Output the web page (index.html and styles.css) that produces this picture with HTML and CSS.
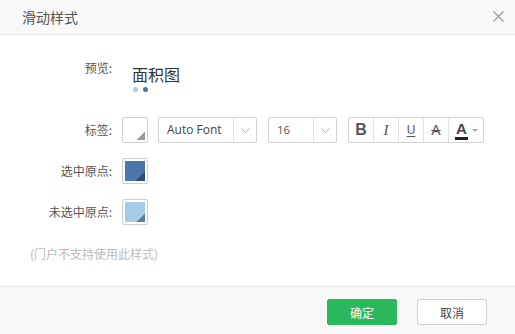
FILE: index.html
```html
<!DOCTYPE html>
<html lang="zh">
<head>
<meta charset="utf-8">
<title>滑动样式</title>
<link rel="stylesheet" href="styles.css">
</head>
<body>
<div class="dialog">
  <div class="header">
    <span class="title">滑动样式</span>
    <svg class="close" width="11" height="11" viewBox="0 0 11 11"><path d="M0.5 0.5L10.5 10.5M10.5 0.5L0.5 10.5" stroke="#999" stroke-width="1.1" fill="none"/></svg>
  </div>
  <div class="body">
    <div class="row preview-row">
      <div class="label">预览:</div>
      <div class="preview">
        <div class="preview-text">面积图</div>
        <div class="dots"><span class="dot light"></span><span class="dot dark"></span></div>
      </div>
    </div>
    <div class="row ctrl-row">
      <div class="label">标签:</div>
      <div class="controls">
        <div class="swatch white"><span class="corner"></span></div>
        <div class="select font-select">
          <span class="select-text">Auto Font</span>
          <span class="select-arrow"><svg width="9" height="5" viewBox="0 0 9 5"><path d="M0.5 0.5L4.5 4.5L8.5 0.5" stroke="#b5b5b5" fill="none"/></svg></span>
        </div>
        <div class="select size-select">
          <span class="select-text">16</span>
          <span class="select-arrow"><svg width="9" height="5" viewBox="0 0 9 5"><path d="M0.5 0.5L4.5 4.5L8.5 0.5" stroke="#b5b5b5" fill="none"/></svg></span>
        </div>
        <div class="toolbar">
          <span class="tb b">B</span>
          <span class="tb i">I</span>
          <span class="tb u">U</span>
          <span class="tb s">A</span>
          <span class="tb color"><span class="color-a">A</span><span class="caret"></span></span>
        </div>
      </div>
    </div>
    <div class="row ctrl-row">
      <div class="label">选中原点:</div>
      <div class="controls">
        <div class="swatch"><span class="fill dark-fill"><span class="corner dark-corner"></span></span></div>
      </div>
    </div>
    <div class="row ctrl-row">
      <div class="label">未选中原点:</div>
      <div class="controls">
        <div class="swatch"><span class="fill light-fill"><span class="corner light-corner"></span></span></div>
      </div>
    </div>
    <div class="note">(门户不支持使用此样式)</div>
  </div>
  <div class="footer">
    <button class="btn ok">确定</button>
    <button class="btn cancel">取消</button>
  </div>
</div>
</body>
</html>
```

FILE: styles.css
```css
* { box-sizing: border-box; }
html, body { margin: 0; padding: 0; background: #fff; }
body {
  font-family: "Noto Sans CJK SC", "Open Sans", sans-serif;
  color: #555;
  font-size: 12px;
}
.dialog {
  width: 515px;
  height: 334px;
  display: flex;
  flex-direction: column;
  background: #fff;
}
.header {
  height: 35px;
  flex: none;
  background: #f8f8f8;
  border-bottom: 1px solid #e8e8e8;
  display: flex;
  align-items: center;
  justify-content: space-between;
  padding: 0 11px 1px 22px;
}
.title {
  font-size: 14px;
  color: #555;
  line-height: 20px;
}
.close { display: block; }
.body {
  flex: 1;
  padding-top: 23px;
}
.row {
  display: grid;
  grid-template-columns: 112px 1fr;
  column-gap: 10px;
}
.label {
  text-align: right;
  color: #555;
  font-size: 12px;
  line-height: 20px;
  white-space: nowrap;
}
.preview-row {
  height: 44px;
  margin-bottom: 15px;
}
.preview {
  padding-left: 10px;
  padding-top: 5px;
}
.preview-text {
  font-size: 16px;
  line-height: 22px;
  color: #333;
}
.dots {
  display: flex;
  gap: 5px;
  margin-top: 2px;
  padding-left: 1px;
}
.dot {
  width: 5px;
  height: 5px;
  border-radius: 50%;
  display: block;
}
.dot.light { background: #a4cbe8; }
.dot.dark { background: #4a76a8; }
.ctrl-row {
  height: 26px;
  margin-bottom: 15px;
}
.ctrl-row .label { line-height: 26px; }
.controls {
  display: flex;
  align-items: center;
  height: 26px;
}
.swatch {
  width: 26px;
  height: 26px;
  border: 1px solid #cfcfcf;
  border-radius: 2px;
  padding: 2px;
  position: relative;
  background: #fff;
  flex: none;
}
.swatch.white .corner {
  position: absolute;
  right: 2px;
  bottom: 2px;
  width: 8px;
  height: 8px;
  background: linear-gradient(135deg, transparent 50%, #9a9a9a 50%);
}
.fill {
  display: block;
  width: 20px;
  height: 20px;
  position: relative;
}
.dark-fill { background: #4a76a8; }
.light-fill { background: #a4cbe8; }
.fill .corner {
  position: absolute;
  right: 0;
  bottom: 0;
  width: 9px;
  height: 9px;
}
.dark-corner { background: linear-gradient(135deg, transparent 50%, #2e4e72 50%); }
.light-corner { background: linear-gradient(135deg, transparent 50%, #5d7d97 50%); }
.select {
  display: flex;
  height: 26px;
  border: 1px solid #d4d4d4;
  border-radius: 2px;
  background: #fff;
  flex: none;
  font-family: "Open Sans", "Noto Sans", sans-serif;
  font-size: 12px;
  color: #444;
}
.select-text {
  flex: 1;
  padding-left: 8px;
  line-height: 24px;
}
.size-select .select-text { color: #555; font-size: 11.5px; }
.select-arrow {
  width: 23px;
  border-left: 1px solid #e0e0e0;
  display: flex;
  align-items: center;
  justify-content: center;
}
.select-arrow svg { display: block; }
.font-select { width: 99px; margin-left: 10px; }
.size-select { width: 69px; margin-left: 11px; }
.toolbar {
  display: flex;
  height: 26px;
  margin-left: 11px;
  border: 1px solid #d4d4d4;
  border-radius: 2px;
  flex: none;
}
.tb {
  width: 25px;
  height: 24px;
  display: flex;
  align-items: center;
  justify-content: center;
  border-left: 1px solid #e0e0e0;
  color: #555;
  font-family: "Liberation Sans", Arial, sans-serif;
}
.tb:first-child { border-left: none; width: 24px; }
.tb.b { font-weight: bold; font-size: 16px; }
.tb.i { font-family: "Liberation Serif", serif; font-style: italic; font-size: 15px; }
.tb.u { text-decoration: underline; font-size: 12px; text-underline-offset: 2px; }
.tb.s { text-decoration: line-through; font-size: 14px; font-weight: normal; }
.tb.color { width: 35px; justify-content: flex-start; padding-left: 6px; }
.color-a {
  font-size: 15px;
  font-weight: bold;
  color: #444;
  line-height: 16px;
  border-bottom: 3px solid #222;
  padding: 0 1px;
}
.caret {
  width: 0;
  height: 0;
  border-left: 3px solid transparent;
  border-right: 3px solid transparent;
  border-top: 3px solid #aaa;
  margin-left: 4px;
}
.note {
  padding-left: 30px;
  margin-top: 19px;
  line-height: 20px;
  color: #bbb;
  font-size: 12px;
}
.footer {
  height: 48px;
  flex: none;
  background: #f8f8f8;
  border-top: 1px solid #e8e8e8;
  display: flex;
  justify-content: flex-end;
  align-items: flex-start;
  padding: 12px 28px 0 0;
  gap: 20px;
}
.btn {
  width: 70px;
  height: 26px;
  border-radius: 2px;
  font-family: "Noto Sans CJK SC", sans-serif;
  font-size: 12px;
  padding: 0;
  cursor: pointer;
}
.btn.ok {
  background: #2bb85d;
  border: 1px solid #2bb85d;
  color: #fff;
}
.btn.cancel {
  background: #fff;
  border: 1px solid #cfcfcf;
  color: #444;
}
```
